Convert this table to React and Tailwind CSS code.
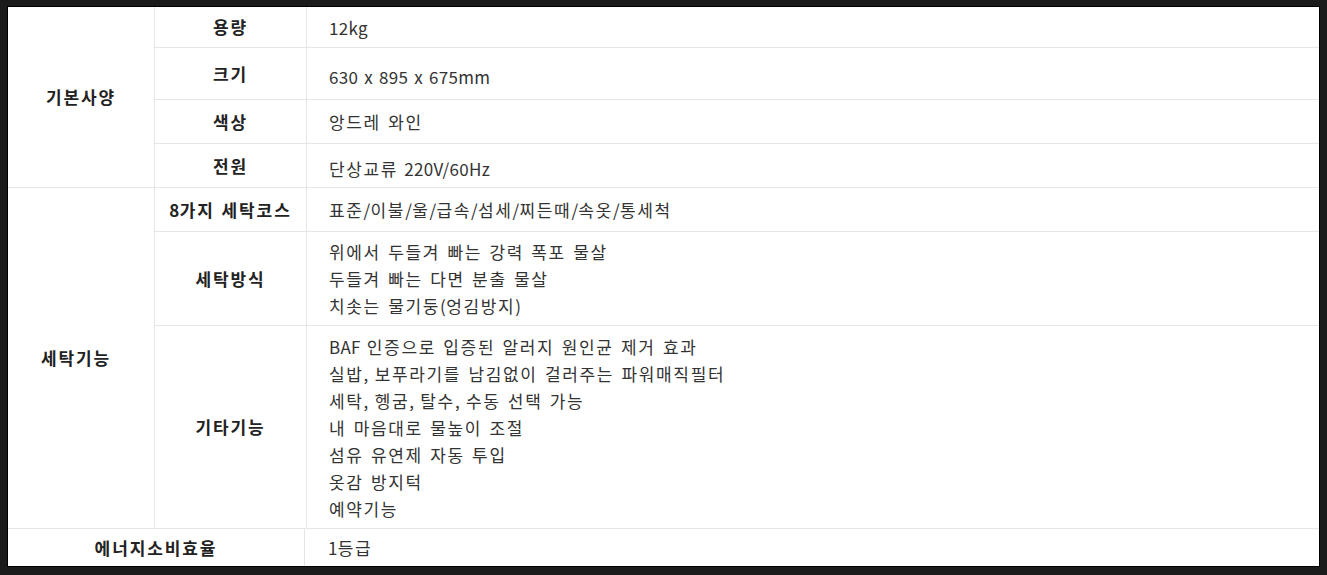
import React from "react";

const font = { fontFamily: '"Noto Sans CJK KR", "Noto Sans", sans-serif' };

const HANGUL = /([가-힣](?:[가-힣\s]*[가-힣])?)/;

function T({ text, bold }) {
  const parts = text.split(HANGUL).filter((p) => p !== "");
  return (
    <span className={bold ? "[word-spacing:1px]" : "[word-spacing:1.9px]"}>
      {parts.map((p, i) =>
        /[가-힣]/.test(p) ? (
          <span key={i} className={bold ? "tracking-[1.9px]" : "tracking-[1.65px]"}>
            {p}
          </span>
        ) : (
          <span key={i} className="tracking-[0.3px]">
            {p}
          </span>
        )
      )}
    </span>
  );
}

function Row({ label, lines, h, last, shift }) {
  return (
    <div className={`flex ${last ? "" : "border-b border-[#e6e6e6]"}`} style={{ height: h }}>
      <div className="w-[152px] shrink-0 border-r border-[#e6e6e6] flex items-center justify-center font-bold text-[17px] text-[#222]">
        <T text={label} bold />
      </div>
      <div
        className={`flex-1 flex flex-col justify-center pl-[22px] text-[17px] leading-[27px] text-[#333] ${
          shift ? "pt-[5px]" : ""
        }`}
      >
        {lines.map((l, i) => (
          <div key={i} className="whitespace-nowrap">
            <T text={l} />
          </div>
        ))}
      </div>
    </div>
  );
}

export default function App() {
  return (
    <div className="w-[1327px] h-[575px] bg-[#1b1b1b] pt-[6px] pl-[7px]" style={font}>
      <div className="w-[1313px] h-[561px] border border-black bg-white flex flex-col">
        <div className="flex border-b border-[#e6e6e6]">
          <div className="w-[147px] shrink-0 border-r border-[#e6e6e6] flex items-center justify-center font-bold text-[17px] text-[#222]">
            <T text="기본사양" bold />
          </div>
          <div className="flex-1 flex flex-col">
            <Row label="용량" h={41} lines={["12kg"]} />
            <Row label="크기" h={52} shift lines={["630 x 895 x 675mm"]} />
            <Row label="색상" h={44} lines={["앙드레 와인"]} />
            <Row label="전원" h={43} last shift lines={["단상교류 220V/60Hz"]} />
          </div>
        </div>
        <div className="flex border-b border-[#e6e6e6]">
          <div className="w-[147px] shrink-0 border-r border-[#e6e6e6] flex items-center justify-center font-bold text-[17px] text-[#222] pr-[10px]">
            <T text="세탁기능" bold />
          </div>
          <div className="flex-1 flex flex-col">
            <Row label="8가지 세탁코스" h={44} lines={["표준/이불/울/급속/섬세/찌든때/속옷/통세척"]} />
            <Row
              label="세탁방식"
              h={94}
              lines={["위에서 두들겨 빠는 강력 폭포 물살", "두들겨 빠는 다면 분출 물살", "치솟는 물기둥(엉김방지)"]}
            />
            <Row
              label="기타기능"
              h={202}
              last
              lines={[
                "BAF 인증으로 입증된 알러지 원인균 제거 효과",
                "실밥, 보푸라기를 남김없이 걸러주는 파워매직필터",
                "세탁, 헹굼, 탈수, 수동 선택 가능",
                "내 마음대로 물높이 조절",
                "섬유 유연제 자동 투입",
                "옷감 방지턱",
                "예약기능",
              ]}
            />
          </div>
        </div>
        <div className="flex flex-1">
          <div className="w-[297px] shrink-0 border-r border-[#e6e6e6] flex items-center justify-center font-bold text-[17px] text-[#222]">
            <T text="에너지소비효율" bold />
          </div>
          <div className="flex-1 flex items-center pl-[23px] text-[17px] text-[#333]">
            <T text="1등급" />
          </div>
        </div>
      </div>
    </div>
  );
}
